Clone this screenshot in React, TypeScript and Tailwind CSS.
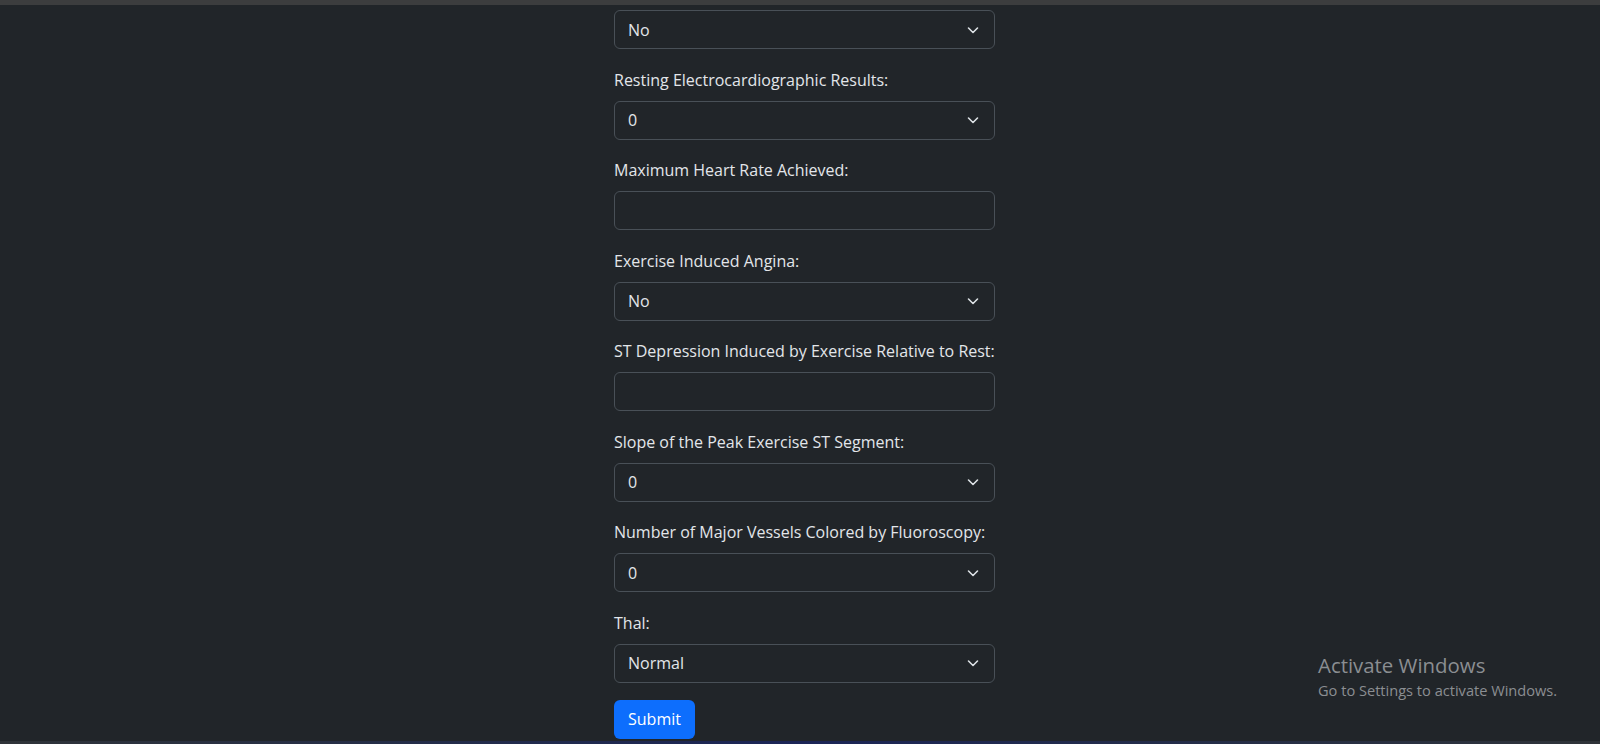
import React from 'react';

type Field = { label?: string; kind: 'select' | 'input'; value?: string };

const fields: Field[] = [
  { kind: 'select', value: 'No' },
  { label: 'Resting Electrocardiographic Results:', kind: 'select', value: '0' },
  { label: 'Maximum Heart Rate Achieved:', kind: 'input' },
  { label: 'Exercise Induced Angina:', kind: 'select', value: 'No' },
  { label: 'ST Depression Induced by Exercise Relative to Rest:', kind: 'input' },
  { label: 'Slope of the Peak Exercise ST Segment:', kind: 'select', value: '0' },
  { label: 'Number of Major Vessels Colored by Fluoroscopy:', kind: 'select', value: '0' },
  { label: 'Thal:', kind: 'select', value: 'Normal' },
];

const Chevron = () => (
  <svg width="16" height="16" viewBox="0 0 16 16" fill="none">
    <path d="m3.5 6 4.5 4.5 4.5-4.5" stroke="#dee2e6" strokeWidth="1.6" strokeLinecap="round" strokeLinejoin="round" />
  </svg>
);

const FormField = ({ field }: { field: Field }) => (
  <div className="flex flex-col">
    {field.label && <label className="mb-[9px] text-[16px] leading-[23px] text-[#e3e6ea]">{field.label}</label>}
    {field.kind === 'select' ? (
      <div className="flex h-[39px] items-center justify-between rounded-[6px] border border-[#495057] bg-[#212529] pl-[13px] pr-[13px] text-[16px] text-[#e3e6ea]">
        <span>{field.value}</span>
        <Chevron />
      </div>
    ) : (
      <div className="h-[39px] rounded-[6px] border border-[#495057] bg-[#212529]" />
    )}
  </div>
);

export default function App() {
  return (
    <div
      className="relative flex h-[744px] w-full flex-col overflow-hidden bg-[#212529]"
      style={{ fontFamily: '"Open Sans", "Noto Sans", sans-serif' }}
    >
      <div className="h-[5px] shrink-0 bg-[#3c3d3e]" />
      <div className="flex-1 pl-[614px] pt-[5px]">
        <div className="flex w-[381px] flex-col gap-[19.5px]">
          {fields.map((f, i) => (
            <FormField key={i} field={f} />
          ))}
        </div>
        <button className="mt-[17px] h-[39px] rounded-[6px] bg-[#0d6efd] px-[14px] text-[16px] text-white">
          Submit
        </button>
      </div>
      <div className="h-[3px] shrink-0 bg-gradient-to-r from-[#2f3338] via-[#1b2456] to-[#2f3338]" />

      <div className="absolute left-[1318px] top-[652px] text-[#8b8e92]">
        <div className="text-[20.4px] leading-[26px]">Activate Windows</div>
        <div className="mt-[2px] text-[14.6px] leading-[21px]">Go to Settings to activate Windows.</div>
      </div>
    </div>
  );
}
